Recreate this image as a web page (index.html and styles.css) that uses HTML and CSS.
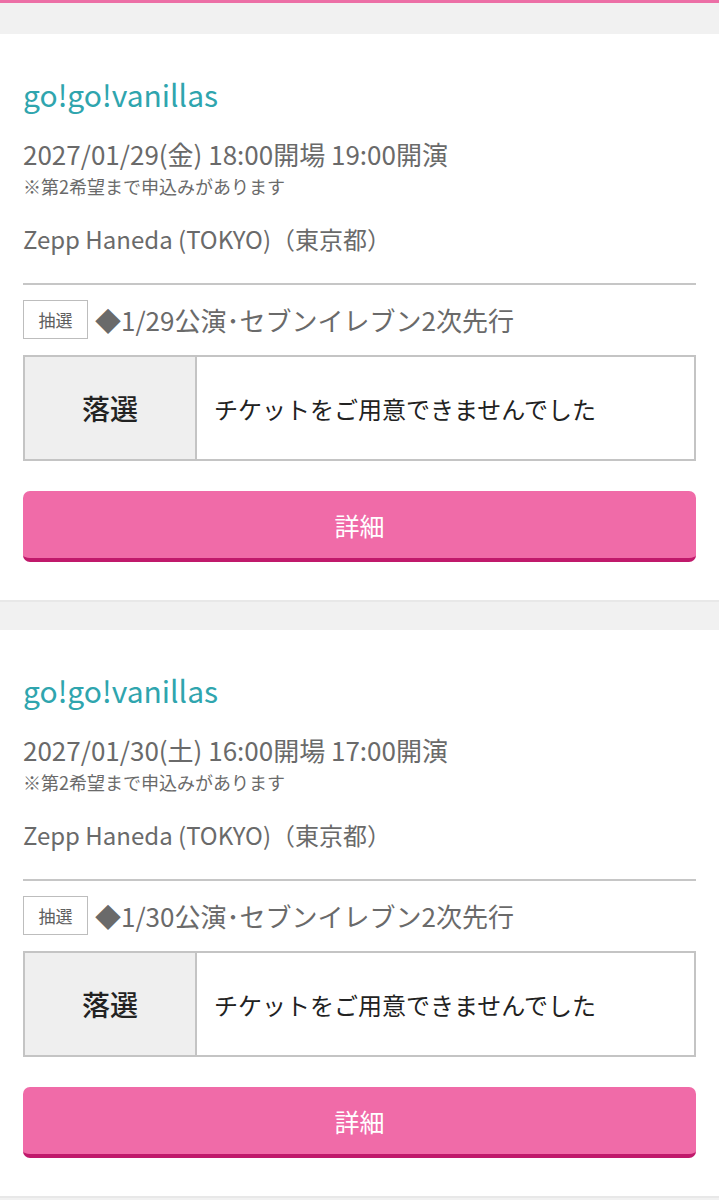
FILE: index.html
```html
<!DOCTYPE html>
<html lang="ja">
<head>
<meta charset="utf-8">
<title>申込状況</title>
<link rel="stylesheet" href="styles.css">
</head>
<body>
<div class="topbar"></div>
<main class="list">
  <section class="card">
    <h2 class="artist">go!go!vanillas</h2>
    <p class="date">2027/01/29(金) 18:00開場 19:00開演</p>
    <p class="note">※第2希望まで申込みがあります</p>
    <p class="venue">Zepp Haneda (TOKYO)（東京都）</p>
    <hr class="rule">
    <div class="sale">
      <span class="tag">抽選</span>
      <span class="sale-name">◆1/29公演･セブンイレブン2次先行</span>
    </div>
    <div class="result">
      <div class="result-label">落選</div>
      <div class="result-text">チケットをご用意できませんでした</div>
    </div>
    <a class="btn" href="#">詳細</a>
  </section>
  <section class="card">
    <h2 class="artist">go!go!vanillas</h2>
    <p class="date">2027/01/30(土) 16:00開場 17:00開演</p>
    <p class="note">※第2希望まで申込みがあります</p>
    <p class="venue">Zepp Haneda (TOKYO)（東京都）</p>
    <hr class="rule">
    <div class="sale">
      <span class="tag">抽選</span>
      <span class="sale-name">◆1/30公演･セブンイレブン2次先行</span>
    </div>
    <div class="result">
      <div class="result-label">落選</div>
      <div class="result-text">チケットをご用意できませんでした</div>
    </div>
    <a class="btn" href="#">詳細</a>
  </section>
</main>
</body>
</html>
```
FILE: styles.css
```css
html, body {
  margin: 0;
  padding: 0;
  background: #f1f1f1;
  font-family: "Noto Sans CJK JP", "Noto Sans", sans-serif;
}
.topbar {
  height: 3px;
  background: #ec6fa6;
}
.list {
  display: flex;
  flex-direction: column;
  gap: 28px;
  padding-top: 31px;
}
.card {
  background: #fff;
  padding: 40px 23px 38px;
  border-bottom: 2px solid #e8e8e8;
}
.artist {
  margin: 0;
  font-size: 30px;
  line-height: 40px;
  font-weight: 400;
  color: #2fa5ae;
}
.date {
  margin: 24px 0 0;
  font-size: 26px;
  line-height: 32px;
  color: #6a6a6a;
}
.note {
  margin: 5px 0 0;
  font-size: 18px;
  line-height: 22px;
  color: #6a6a6a;
}
.venue {
  margin: 27px 0 0;
  font-size: 24px;
  line-height: 30px;
  color: #6a6a6a;
}
.rule {
  margin: 29px 0 0;
  border: 0;
  border-top: 2px solid #c6c6c6;
  height: 0;
}
.sale {
  margin-top: 15px;
  display: flex;
  align-items: center;
  gap: 7px;
}
.tag {
  box-sizing: border-box;
  width: 65px;
  height: 39px;
  border: 1px solid #bdbdbd;
  display: flex;
  align-items: center;
  justify-content: center;
  font-size: 17px;
  color: #5e5e5e;
}
.sale-name {
  font-size: 26px;
  line-height: 32px;
  color: #6a6a6a;
}
.result {
  margin-top: 16px;
  display: flex;
  height: 106px;
  box-sizing: border-box;
  border: 2px solid #c4c4c4;
}
.result-label {
  width: 170px;
  flex: none;
  background: #efefef;
  border-right: 2px solid #c4c4c4;
  display: flex;
  align-items: center;
  justify-content: center;
  font-size: 28px;
  font-weight: 500;
  color: #222;
}
.result-text {
  flex: 1;
  display: flex;
  align-items: center;
  padding-left: 17px;
  font-size: 24px;
  color: #222;
}
.btn {
  margin-top: 30px;
  display: flex;
  align-items: center;
  justify-content: center;
  box-sizing: border-box;
  height: 71px;
  background: #f06ba8;
  border-bottom: 4px solid #c0196b;
  border-radius: 7px;
  color: #fff;
  font-size: 25px;
  text-decoration: none;
}
```
